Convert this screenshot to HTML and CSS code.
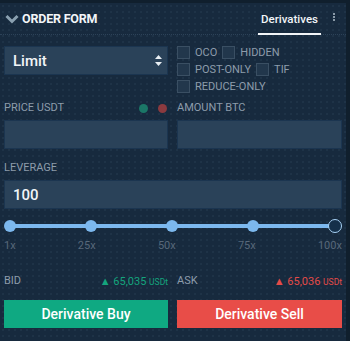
FILE: index.html
```html
<!DOCTYPE html>
<html lang="en">

<head>
  <meta charset="UTF-8" />
  <meta name="viewport" content="width=device-width, initial-scale=1.0" />
  <title>Order Form</title>
  <link rel="stylesheet" href="styles.css">
</head>

<body>
  <div class="panel">
    <div class="header">
      <div class="title">
        <svg class="chevron" width="14" height="10" viewBox="0 0 14 10">
          <path d="M1.5 2 L7 7.5 L12.5 2" fill="none" stroke="#8aa0b0" stroke-width="3" />
        </svg>
        ORDER FORM
      </div>
      <div class="tabs">
        <div class="tab active">Derivatives</div>
        <div class="more"><span></span><span></span><span></span></div>
      </div>
    </div>

    <div class="row top-row">
      <div class="select">
        <span>Limit</span>
        <svg width="7" height="11" viewBox="0 0 7 11">
          <path d="M3.5 0 L7 4 L0 4 Z M3.5 11 L7 7 L0 7 Z" fill="#e8eef3" />
        </svg>
      </div>
      <div class="options">
        <div class="opt-line">
          <label class="check"><i></i>OCO</label>
          <label class="check"><i></i>HIDDEN</label>
        </div>
        <div class="opt-line">
          <label class="check"><i></i>POST-ONLY</label>
          <label class="check"><i></i>TIF</label>
        </div>
        <div class="opt-line">
          <label class="check"><i></i>REDUCE-ONLY</label>
        </div>
      </div>
    </div>

    <div class="row fields">
      <div class="field">
        <div class="label">PRICE USDT
          <span class="dots"><b class="dot green"></b><b class="dot red"></b></span>
        </div>
        <div class="input"></div>
      </div>
      <div class="field">
        <div class="label">AMOUNT BTC</div>
        <div class="input"></div>
      </div>
    </div>

    <div class="leverage">
      <div class="label">LEVERAGE</div>
      <div class="input value">100</div>
    </div>

    <div class="slider">
      <div class="track">
        <b class="knob"></b><b class="knob"></b><b class="knob"></b><b class="knob"></b><b class="knob last"></b>
      </div>
      <div class="marks">
        <span>1x</span><span>25x</span><span>50x</span><span>75x</span><span>100x</span>
      </div>
    </div>

    <div class="row quotes">
      <div class="quote">
        <span class="label">BID</span>
        <span class="price up">&#9650; 65,035 <small>USDt</small></span>
      </div>
      <div class="quote">
        <span class="label">ASK</span>
        <span class="price down">&#9650; 65,036 <small>USDt</small></span>
      </div>
    </div>

    <div class="row buttons">
      <button class="buy">Derivative Buy</button>
      <button class="sell">Derivative Sell</button>
    </div>
  </div>
</body>

</html>
```

FILE: styles.css
```css
body {
  margin: 0;
  background: #101f2d;
  font-family: Roboto, "Liberation Sans", sans-serif;
  width: 350px;
  height: 341px;
  overflow: hidden;
}

.panel {
  width: 346px;
  height: 338px;
  margin-top: 3px;
  background-color: #172a3e;
  background-image: radial-gradient(circle, rgba(120, 150, 180, 0.12) 0.6px, transparent 0.9px);
  background-size: 6px 6px;
  box-sizing: border-box;
}

.header {
  height: 31px;
  display: flex;
  justify-content: space-between;
  align-items: stretch;
  border-bottom: 1px dotted #2c4258;
  padding: 0 11px 0 5px;
}

.title {
  display: flex;
  align-items: center;
  gap: 3px;
  color: #f2f5f8;
  font-size: 12.5px;
  font-weight: 700;
  letter-spacing: -0.2px;
}

.chevron {
  margin-top: 1px;
}

.tabs {
  display: flex;
  align-items: stretch;
}

.tab {
  display: flex;
  align-items: center;
  padding: 1px 3px 0;
  color: #f2f5f8;
  font-size: 11.5px;
  font-weight: 500;
  box-sizing: border-box;
}

.tab.active {
  border-bottom: 2px solid #f2f5f8;
  margin-bottom: -1px;
}

.more {
  display: flex;
  flex-direction: column;
  justify-content: center;
  gap: 1px;
  margin-left: 12px;
  padding-bottom: 3px;
}

.more span {
  width: 2px;
  height: 2px;
  background: #8a9aa8;
}

.row {
  display: grid;
  grid-template-columns: 164px 165px;
  gap: 9px;
  padding: 0 4px;
}

.top-row {
  margin-top: 11px;
  align-items: start;
}

.select {
  height: 29px;
  box-sizing: border-box;
  border: 1px solid #1b3550;
  background: #2a4259;
  display: flex;
  align-items: center;
  justify-content: space-between;
  padding: 0 5px 0 8px;
  color: #f2f5f8;
  font-size: 15px;
  font-weight: 500;
}

.options {
  display: flex;
  flex-direction: column;
  gap: 4px;
}

.opt-line {
  display: flex;
  gap: 5px;
}

.check {
  display: flex;
  align-items: center;
  gap: 5px;
  color: #8d9cab;
  font-size: 11px;
  line-height: 12px;
}

.check i {
  width: 11px;
  height: 11px;
  border: 1px solid #3a4f63;
  background: #22374c;
}

.fields {
  margin-top: 9px;
}

.label {
  color: #8d9cab;
  font-size: 11px;
  line-height: 12px;
  display: flex;
  justify-content: space-between;
  align-items: center;
}

.dots {
  display: flex;
  gap: 10px;
  padding-right: 1px;
}

.dot {
  flex: none;
  width: 9px;
  height: 9px;
  border-radius: 50%;
}

.dot.green {
  background: #1b7767;
}

.dot.red {
  background: #8b3a3f;
}

.input {
  height: 29px;
  margin-top: 6px;
  box-sizing: border-box;
  border: 1px solid #1b3550;
  background: #2a4259;
}

.leverage {
  margin-top: 13px;
  padding: 0 4px;
}

.input.value {
  margin-top: 6px;
  width: 338px;
  display: flex;
  align-items: center;
  padding-left: 8px;
  color: #f2f5f8;
  font-size: 15px;
  font-weight: 500;
}

.slider {
  margin-top: 11px;
  padding: 0 4px;
}

.track {
  position: relative;
  height: 12px;
  display: flex;
  justify-content: space-between;
}

.track::before {
  content: "";
  position: absolute;
  left: 6px;
  right: 6px;
  top: 4px;
  height: 4px;
  background: #7cb8ee;
}

.knob {
  position: relative;
  width: 12px;
  height: 12px;
  border-radius: 50%;
  background: #7cb8ee;
}

.knob.last {
  width: 14px;
  height: 14px;
  margin-top: -1px;
  box-sizing: border-box;
  border: 1.5px solid #a8d2f5;
  background: #15304a;
}

.marks {
  display: flex;
  justify-content: space-between;
  margin-top: 7px;
  color: #57687a;
  font-size: 11px;
}

.quotes {
  margin-top: 22px;
}

.quote {
  display: flex;
  justify-content: space-between;
  align-items: center;
  height: 14px;
}

.price {
  font-size: 11px;
}

.price small {
  font-size: 8.5px;
}

.price.up {
  color: #14a47d;
}

.price.down {
  color: #e44b48;
}

.buttons {
  margin-top: 12px;
}

button {
  height: 28px;
  border: none;
  color: #ffffff;
  font-family: Roboto, "Liberation Sans", sans-serif;
  font-size: 14px;
  font-weight: 500;
  cursor: pointer;
}

.buy {
  background: #0fa982;
}

.sell {
  background: #e84d48;
}
```
